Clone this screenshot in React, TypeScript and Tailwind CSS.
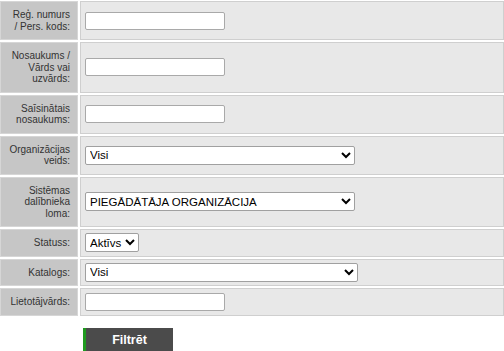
import React from "react";

const label = "bg-[#c6c6c6] border border-[#d6d6d6] px-[7px] py-[7px] flex items-center justify-end text-right text-[10px] leading-[11.5px] text-[#333]";
const value = "bg-[#e8e8e8] border border-[#cfcfcf] px-[4px] py-[2px] flex items-center";
const textInput = "w-[140px] h-[18px] bg-white border border-[#a9a9a9] rounded-[2px] px-1 text-[11.2px]";
const selectCls = "h-[19px] bg-white border border-[#a0a0a0] rounded-[2px] pl-0 text-[11.5px] text-black";

export default function App() {
  return (
    <div className="w-[504px] h-[351px] bg-white overflow-hidden" style={{ fontFamily: '"Liberation Sans", Arial, sans-serif' }}>
      <div className="grid grid-cols-[78px_1fr] gap-[2px] pt-[1px]">
        <div className={label}>
          <span>Reģ. numurs<br />/ Pers. kods:</span>
        </div>
        <div className={value}>
          <input type="text" className={textInput} />
        </div>

        <div className={label}>
          <span>Nosaukums /<br />Vārds vai<br />uzvārds:</span>
        </div>
        <div className={value}>
          <input type="text" className={textInput} />
        </div>

        <div className={label}>
          <span>Saīsinātais<br />nosaukums:</span>
        </div>
        <div className={value}>
          <input type="text" className={textInput} />
        </div>

        <div className={label}>
          <span>Organizācijas<br />veids:</span>
        </div>
        <div className={value}>
          <select className={`${selectCls} w-[270px]`} defaultValue="Visi">
            <option>Visi</option>
          </select>
        </div>

        <div className={label}>
          <span>Sistēmas<br />dalībnieka<br />loma:</span>
        </div>
        <div className={value}>
          <select className={`${selectCls} w-[270px]`} defaultValue="PIEGĀDĀTĀJA ORGANIZĀCIJA">
            <option>PIEGĀDĀTĀJA ORGANIZĀCIJA</option>
          </select>
        </div>

        <div className={label}>
          <span>Statuss:</span>
        </div>
        <div className={value}>
          <select className={`${selectCls} w-[54px]`} defaultValue="Aktīvs">
            <option>Aktīvs</option>
          </select>
        </div>

        <div className={label}>
          <span>Katalogs:</span>
        </div>
        <div className={value}>
          <select className={`${selectCls} w-[273px]`} defaultValue="Visi">
            <option>Visi</option>
          </select>
        </div>

        <div className={label}>
          <span>Lietotājvārds:</span>
        </div>
        <div className={value}>
          <input type="text" className={textInput} />
        </div>
      </div>

      <div className="pl-[83px] pt-[11px]">
        <button className="w-[90px] h-[23px] bg-[#4b4b4b] border-l-[3px] border-[#1f9a1f] text-white font-bold text-[12.5px]">
          Filtrēt
        </button>
      </div>
    </div>
  );
}
